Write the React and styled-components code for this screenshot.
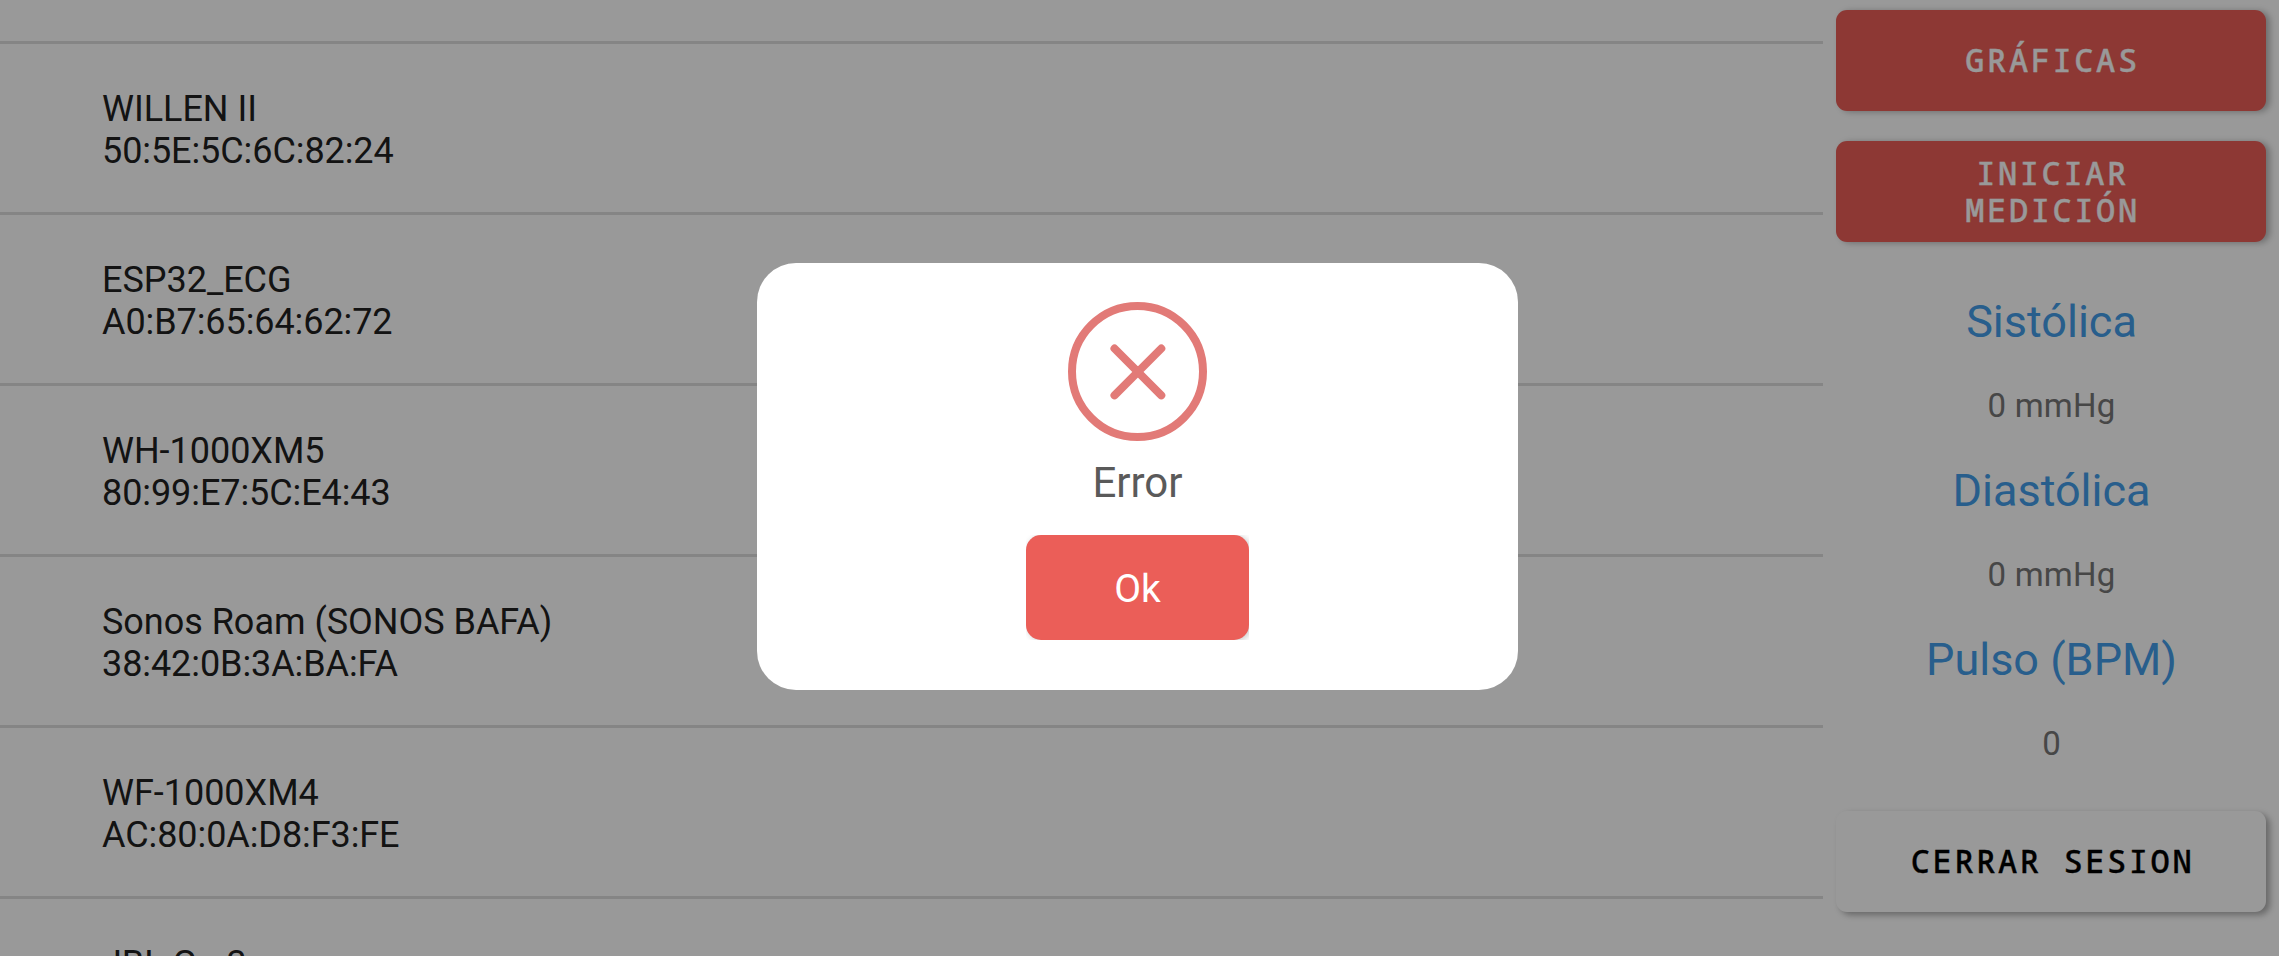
import React from "react";
import styled, { createGlobalStyle } from "styled-components";

const GlobalStyle = createGlobalStyle`
  * { box-sizing: border-box; }
  html, body { margin: 0; height: 100%; overflow: hidden; background: #fff; }
  body { font-family: Roboto, sans-serif; }
  button { border: 0; padding: 0; font: inherit; }
`;

const Screen = styled.main`
  display: flex;
  height: 956px;
  overflow: hidden;
  background: #fff;
`;

const DeviceList = styled.ul`
  width: 1823px;
  height: 956px;
  margin: 0;
  padding: 41px 0 0;
  list-style: none;
  overflow: hidden;
`;

const Device = styled.li`
  height: 171px;
  padding: 44px 0 0 102px;
  border-top: 3px solid #dedede;
  color: #212121;
  font-size: 36px;
  line-height: 42px;
  white-space: nowrap;
`;

const DeviceName = styled.div`
  letter-spacing: -0.02px;
`;

const DeviceAddress = styled.div`
  letter-spacing: -0.08px;
`;

const Sidebar = styled.aside`
  display: flex;
  flex-direction: column;
  flex: 1;
  padding: 10px 13px 0;
`;

const ActionButton = styled.button`
  width: 430px;
  height: 101px;
  margin-bottom: 30px;
  padding: 0 0 ${({ $twoLine }) => ($twoLine ? "1px" : "3px")} 3px;
  border-radius: 11px;
  background: ${({ $plain }) => ($plain ? "#fff" : "#eb5e58")};
  color: ${({ $plain }) => ($plain ? "#000" : "#fff")};
  box-shadow: ${({ $plain }) =>
    $plain ? "4px 3px 6px rgba(0, 0, 0, 0.32)" : "4px 1px 6px rgba(0, 0, 0, 0.28)"};
  font: 500 32px/37px "Noto Sans Mono", "DejaVu Sans Mono", monospace;
  letter-spacing: 2.6px;
  -webkit-text-stroke: 0.35px currentColor;
`;

const Readings = styled.dl`
  display: flex;
  flex-direction: column;
  align-items: center;
  height: 539px;
  margin: 0;
  padding: 23px 0 0 1px;
`;

const ReadingLabel = styled.dt`
  height: 91px;
  color: #439de9;
  font-size: 45px;
  line-height: 53px;
`;

const ReadingValue = styled.dd`
  height: 78px;
  margin: 0;
  color: #777;
  font-size: 33px;
  line-height: 39px;
  letter-spacing: 0.2px;
`;

const Backdrop = styled.div`
  position: fixed;
  inset: 0;
  display: flex;
  justify-content: center;
  align-items: flex-start;
  padding: 263px 4px 0 0;
  background: rgba(0, 0, 0, 0.4);
`;

const Dialog = styled.section`
  display: flex;
  flex-direction: column;
  align-items: center;
  width: 761px;
  height: 427px;
  padding-top: 39px;
  border-radius: 39px;
  background: #fff;
`;

const DialogTitle = styled.h1`
  margin: 17px 0 28px;
  color: #5a5a5a;
  font-size: 42px;
  font-weight: 400;
  line-height: 49px;
`;

const ButtonClip = styled.div`
  width: 223px;
  height: 105px;
  overflow: hidden;
`;

const OkButton = styled.button`
  width: 100%;
  height: 100%;
  padding-top: 2px;
  border-radius: 15px;
  background: #eb5e58;
  box-shadow: 2px 1px 6px rgba(0, 0, 0, 0.22);
  color: #fff;
  font-size: 39px;
`;

const ErrorIcon = () => (
  <svg width="139" height="139" viewBox="0 0 139 139" fill="none" stroke="#e27a77" strokeWidth="8" strokeLinecap="round">
    <circle cx="69.5" cy="69.5" r="65.5" />
    <path d="M46.5 46.5 93.3 93.3M93.3 46.5 46.5 93.3" />
  </svg>
);

const devices = [
  ["WILLEN II", "50:5E:5C:6C:82:24"],
  ["ESP32_ECG", "A0:B7:65:64:62:72"],
  ["WH-1000XM5", "80:99:E7:5C:E4:43"],
  ["Sonos Roam (SONOS BAFA)", "38:42:0B:3A:BA:FA"],
  ["WF-1000XM4", "AC:80:0A:D8:F3:FE"],
  ["JBL Go 3"],
];

const readings = [
  ["Sistólica", "0 mmHg"],
  ["Diastólica", "0 mmHg"],
  ["Pulso (BPM)", "0"],
];

export default function App() {
  return (
    <>
      <GlobalStyle />
      <Screen>
        <DeviceList>
          {devices.map(([name, address]) => (
            <Device key={name}>
              <DeviceName>{name}</DeviceName>
              {address && <DeviceAddress>{address}</DeviceAddress>}
            </Device>
          ))}
        </DeviceList>
        <Sidebar>
          <ActionButton>GRÁFICAS</ActionButton>
          <ActionButton $twoLine>INICIAR<br />MEDICIÓN</ActionButton>
          <Readings>
            {readings.map(([label, value]) => (
              <React.Fragment key={label}>
                <ReadingLabel>{label}</ReadingLabel>
                <ReadingValue>{value}</ReadingValue>
              </React.Fragment>
            ))}
          </Readings>
          <ActionButton $plain>CERRAR SESION</ActionButton>
        </Sidebar>
      </Screen>
      <Backdrop>
        <Dialog role="alertdialog">
          <ErrorIcon />
          <DialogTitle>Error</DialogTitle>
          <ButtonClip>
            <OkButton>Ok</OkButton>
          </ButtonClip>
        </Dialog>
      </Backdrop>
    </>
  );
}
